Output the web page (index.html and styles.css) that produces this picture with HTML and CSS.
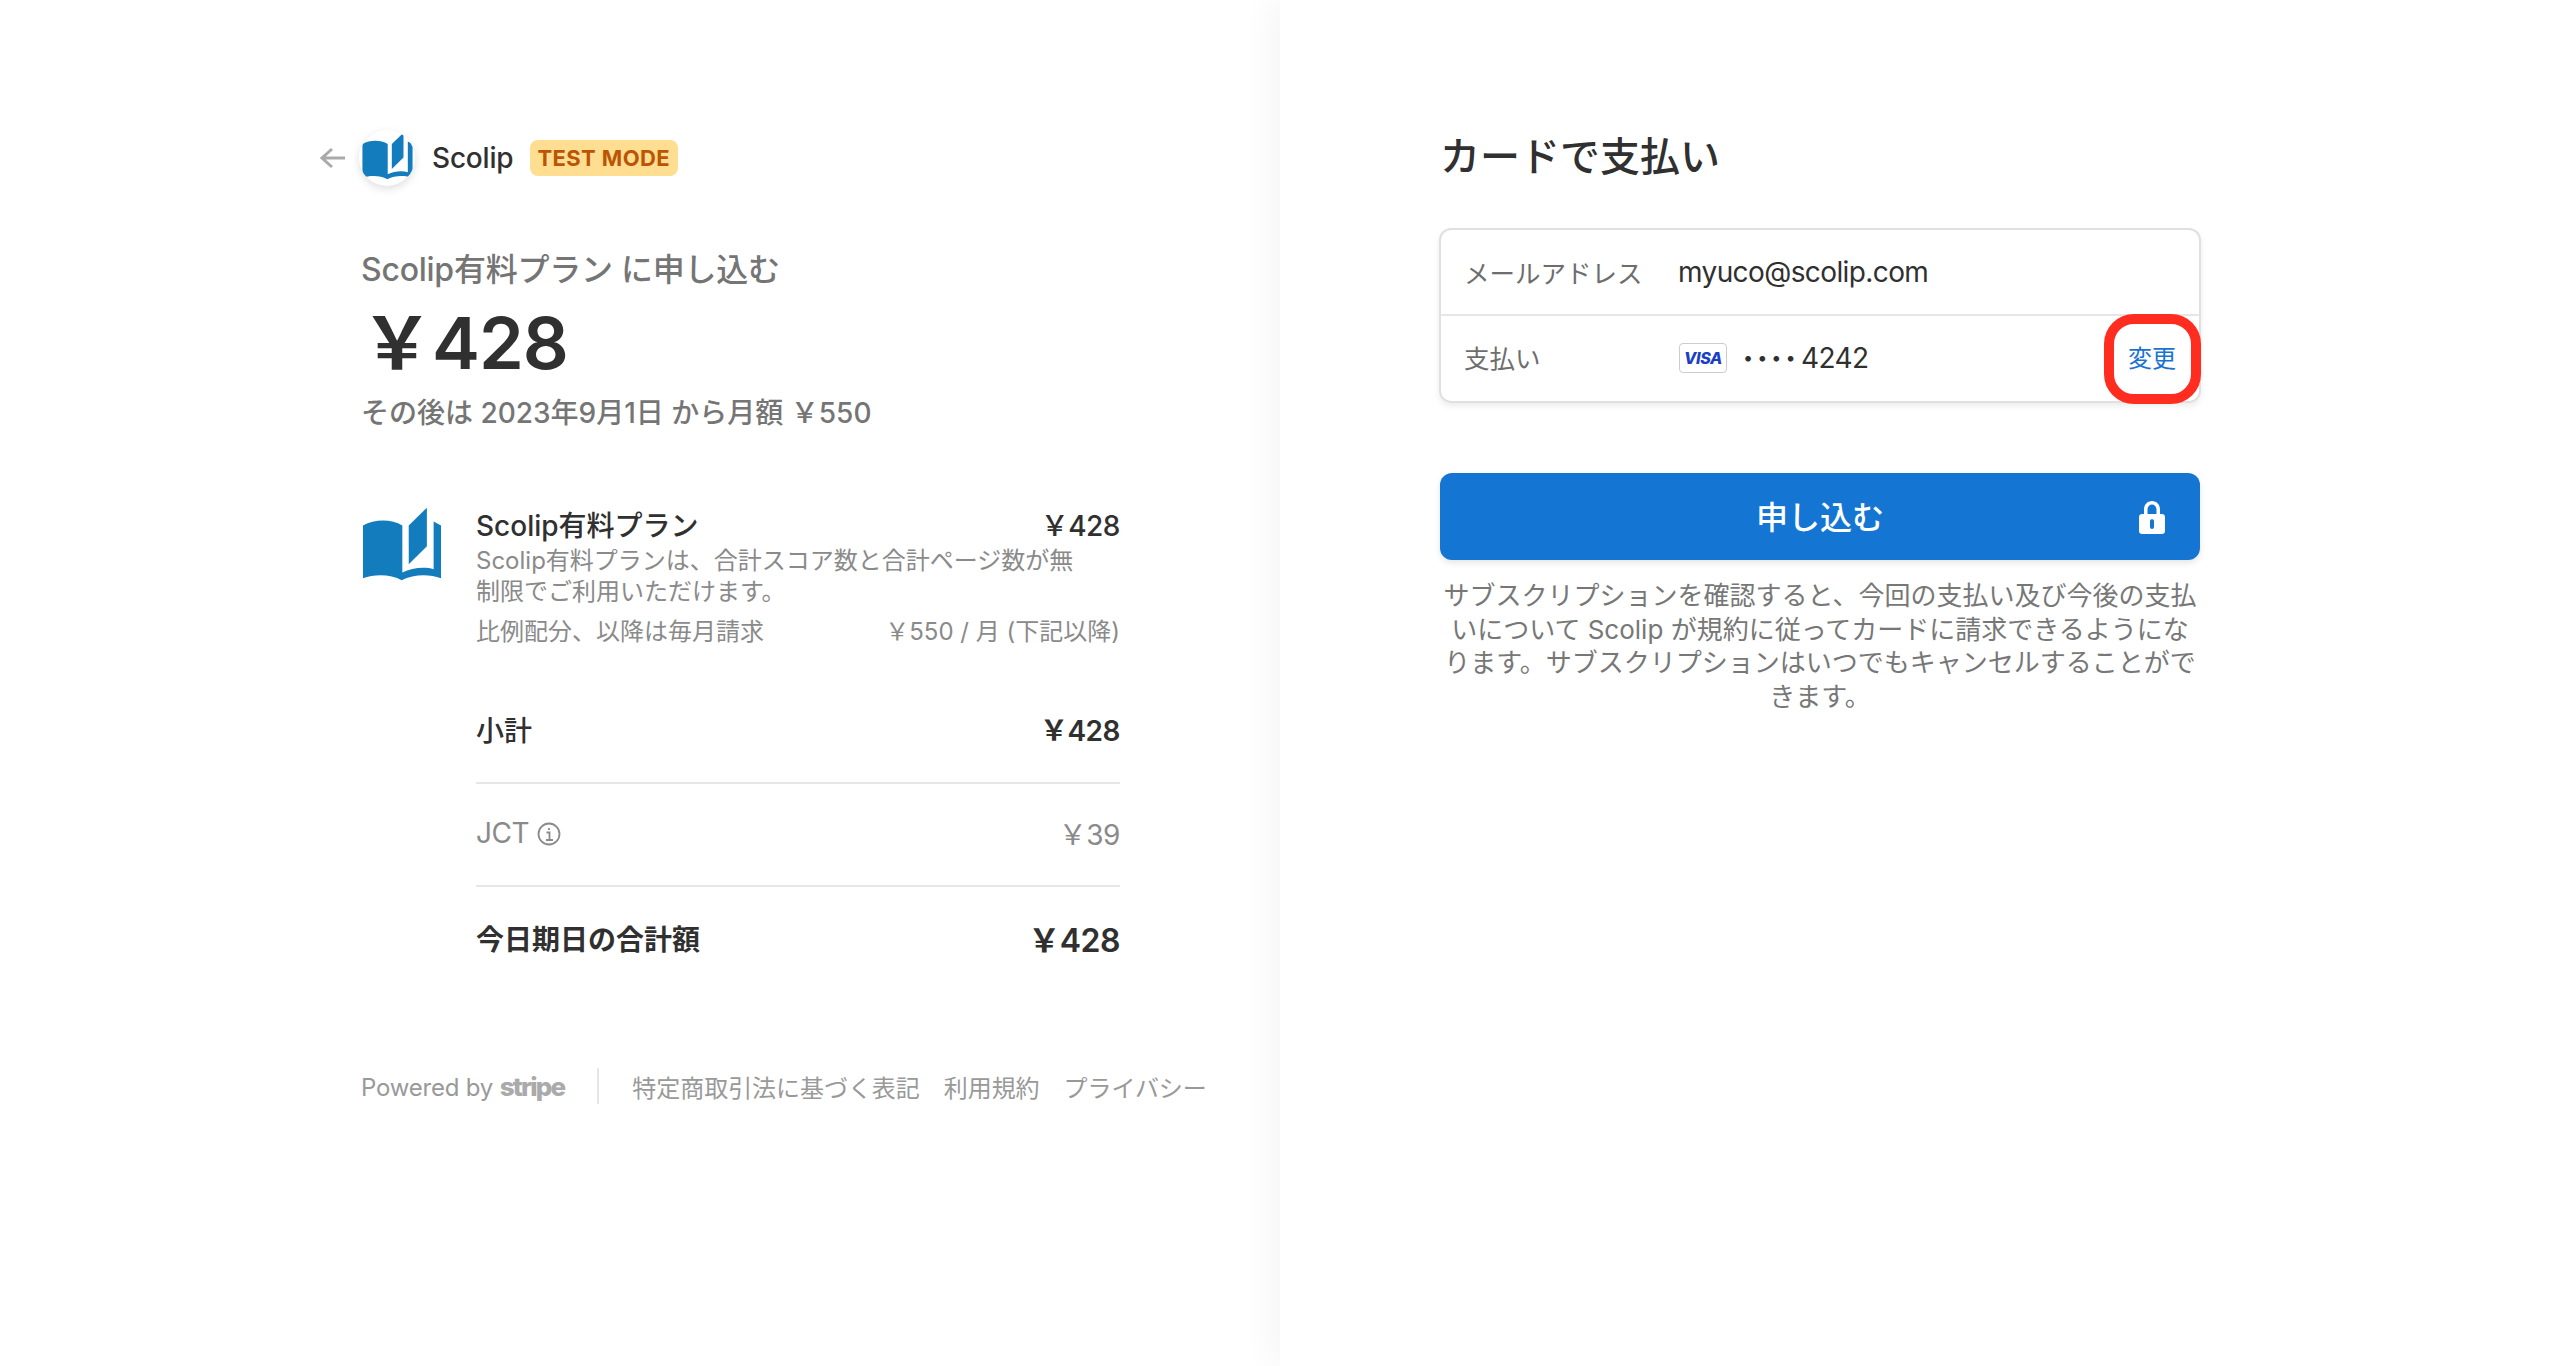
FILE: index.html
```html
<!DOCTYPE html>
<html lang="ja">
<head>
<meta charset="utf-8">
<title>Scolip</title>
<link rel="stylesheet" href="styles.css">
</head>
<body>
<svg class="defs" width="0" height="0" aria-hidden="true"><symbol id="book" viewBox="38 20 236 220"><path d="M40 75C75 55 125 55 157 75V215C185 200 225 197 250 205V63L272 75V232C235 218 190 220 155 238C125 220 75 218 40 232Z"/><path d="M176 75L230 22V137L176 190Z"/></symbol></svg>
<main class="page">
  <section class="summary">
    <header class="brand">
      <svg class="back" viewBox="0 0 26 22"><path d="M12 2L2 11L12 20M2 11H25"/></svg>
      <span class="logo"><svg class="logo-book"><use href="#book"/></svg></span>
      <span class="brand-name">Scolip</span>
      <span class="badge">TEST MODE</span>
    </header>
    <div class="inset">
      <div class="sub-title">Scolip有料プラン に申し込む</div>
      <div class="amount">&#xFFE5;428</div>
      <div class="then">その後は 2023年9月1日 から月額 &#xFFE5;550</div>
      <div class="item">
        <svg class="item-book"><use href="#book"/></svg>
        <div class="item-body">
          <div class="item-head"><span>Scolip有料プラン</span><span class="price">&#xFFE5;428</span></div>
          <p class="item-desc">Scolip有料プランは、合計スコア数と合計ページ数が無制限でご利用いただけます。</p>
          <div class="item-bill"><span>比例配分、以降は毎月請求</span><span>&#xFFE5;550 / 月 (下記以降)</span></div>
        </div>
      </div>
      <div class="totals">
        <div class="row row-sub"><span>小計</span><b class="price">&#xFFE5;428</b></div>
        <div class="row row-tax"><span class="tax-label">JCT<svg class="info" viewBox="0 0 24 24"><circle cx="12" cy="12" r="10.5"/><path d="M9.5 10.5H12.5V18M9 18H16M12 6V8"/></svg></span><span class="price">&#xFFE5;39</span></div>
        <div class="row row-total"><span>今日期日の合計額</span><b class="price">&#xFFE5;428</b></div>
      </div>
      <footer class="foot">
        <span class="powered">Powered by <b class="stripe">stripe</b></span>
        <span class="foot-sep"></span>
        <nav class="foot-links"><span>特定商取引法に基づく表記</span><span>利用規約</span><span>プライバシー</span></nav>
      </footer>
    </div>
  </section>
  <section class="pay">
    <h1 class="pay-title">カードで支払い</h1>
    <div class="card">
      <div class="card-row line"><span class="card-label">メールアドレス</span><span class="card-value">myuco@scolip.com</span></div>
      <div class="card-row card-pay"><span class="card-label">支払い</span><span class="visa">VISA</span><span class="dots">••••</span><span class="card-value">4242</span><span class="change">変更</span><span class="mark"></span></div>
    </div>
    <button class="submit"><span>申し込む</span><svg class="lock" viewBox="0 0 26 33"><path fill-rule="evenodd" d="M5 13V8.500C5 3.500 8.500 0 13 0S21 3.500 21 8.500V13H23C24.700 13 26 14.300 26 16V30C26 31.700 24.700 33 23 33H3C1.300 33 0 31.700 0 30V16C0 14.300 1.300 13 3 13ZM8.500 13H17.500V8.500C17.500 5.500 15.500 3.500 13 3.500S8.500 5.500 8.500 8.500ZM11 20V26C11 28.500 15 28.500 15 26V20C15 17.500 11 17.500 11 20Z"/></svg></button>
    <p class="terms">サブスクリプションを確認すると、今回の支払い及び今後の支払いについて Scolip が規約に従ってカードに請求できるようになります。サブスクリプションはいつでもキャンセルすることができます。</p>
  </section>
</main>
</body>
</html>
```
FILE: styles.css
```css
* { box-sizing: border-box; }
html, body { margin: 0; height: 100%; background: #fff; }
body { font-family: Inter, "Noto Sans CJK JP", sans-serif; color: #303030; overflow: hidden; }
.defs { position: absolute; }
.page { display: grid; grid-template-columns: 1280px 1280px; height: 1366px; }

.summary { padding: 130px 0 0 320px; background: #fff; }
.brand { display: flex; align-items: center; height: 56px; }
.back { width: 26px; height: 22px; fill: none; stroke: #aaa; stroke-width: 3; }
.logo { width: 56px; height: 56px; margin-left: 13px; border-radius: 50%; background: #fff; box-shadow: 0 3px 8px rgba(0,0,0,.13); overflow: hidden; display: flex; align-items: center; justify-content: center; flex: none; }
.logo-book { width: 51px; height: 48px; fill: #137cbd; margin-top: -5px; margin-left: 1px; }
.brand-name { margin-left: 17px; font-size: 28px; font-weight: 500; line-height: 36px; color: #303030; letter-spacing: -.2px; }
.badge { margin-left: 17px; height: 36px; padding: 0 8px 0 7px; display: flex; align-items: center; background: #ffde92; border-radius: 8px; font-size: 22px; font-weight: 700; color: #bb5504; letter-spacing: .4px; }

.inset { padding-left: 41px; width: 800px; }
.sub-title { margin-top: 64px; font-size: 32px; line-height: 40px; font-weight: 500; color: #757575; letter-spacing: -.25px; }
.amount { margin-top: 9px; font-size: 72px; line-height: 88px; font-weight: 600; color: #303030; letter-spacing: -1px; }
.then { margin-top: 8px; font-size: 28px; line-height: 36px; font-weight: 500; color: #757575; white-space: nowrap; }

.item { display: flex; margin-top: 77px; }
.item-book { width: 80px; height: 74px; fill: #137cbd; flex: none; margin: -1px 0 0 1px; }
.item-body { margin-left: 34px; flex: 1; }
.item-head { display: flex; justify-content: space-between; font-size: 28px; line-height: 36px; font-weight: 500; color: #303030; }
.price { letter-spacing: -.5px; }
.item-desc { margin: 1px 0 0; width: 620px; font-size: 24px; line-height: 31px; color: #8a8a8a; }
.item-bill { display: flex; justify-content: space-between; margin-top: 9px; font-size: 24px; line-height: 32px; color: #8a8a8a; }

.totals { margin: 31px 0 0 115px; }
.row { display: flex; justify-content: space-between; align-items: center; height: 103px; padding-bottom: 3px; font-size: 28px; font-weight: 500; }
.row b { font-weight: 600; }
.row-sub { height: 105px; }
.row-sub, .row-tax { border-bottom: 2px solid #e6e6e6; }
.row-tax { color: #8a8a8a; font-weight: 400; }
.row-total { height: 104px; font-weight: 600; }
.row-total b { font-size: 32px; }
.tax-label { display: flex; align-items: center; gap: 8px; letter-spacing: -.5px; }
.info { width: 24px; height: 24px; fill: none; stroke: #8a8a8a; stroke-width: 1.800; margin-top: 2px; }

.foot { display: flex; align-items: center; height: 36px; margin-top: 77px; font-size: 24px; color: #999; white-space: nowrap; }
.powered { letter-spacing: -.2px; }
.stripe { font-size: 26px; font-weight: 800; letter-spacing: -1.800px; color: #aaa; }
.foot-sep { width: 2px; height: 36px; background: #e6e6e6; margin: 0 33px; flex: none; }
.foot-links { display: flex; gap: 24px; letter-spacing: -.05px; }

.pay { padding: 131px 0 0 160px; background: #fff; box-shadow: -10px 0 30px rgba(0,0,0,.04); width: 1280px; }
.pay > * { width: 760px; }
.pay-title { margin: 0; font-size: 40px; line-height: 52px; font-weight: 500; color: #303030; }
.card { margin-top: 45px; width: 762px !important; margin-left: -1px; height: 175px; border: 2px solid #e0e0e0; border-radius: 12px; box-shadow: 0 3px 6px rgba(0,0,0,.08); font-size: 28px; }
.card-row { display: flex; align-items: center; height: 85.500px; padding-left: 23px; position: relative; }
.card-pay { padding-bottom: 2px; }
.line { border-bottom: 2px solid #e6e6e6; height: 86px; }
.card-label { width: 214px; color: #6d6d6d; flex: none; font-size: 25.500px; margin-top: -2px; }
.card-value { letter-spacing: -.6px; }
.visa { width: 48px; height: 30px; margin-left: 1px; border: 1.500px solid #ccc; border-radius: 4px; font-size: 16px; font-weight: 800; font-style: italic; color: #1a3fc4; display: flex; align-items: center; justify-content: center; letter-spacing: -.3px; }
.dots { margin-left: 16px; width: 58px; font-size: 18px; letter-spacing: 4px; }
.change { position: absolute; right: 23px; font-size: 24px; color: #1a73d2; margin-top: -3px; }
.mark { position: absolute; right: -2px; top: -2px; width: 97px; height: 90px; border: 10px solid #ff2d20; border-radius: 30px; }

.submit { margin-top: 70px; height: 87px; border: 0; border-radius: 12px; background: #1476d2; color: #fff; font: inherit; font-size: 32px; font-weight: 500; display: flex; align-items: center; justify-content: center; position: relative; box-shadow: 0 3px 6px rgba(0,0,0,.1); padding: 0 0 4px; }
.lock { position: absolute; right: 35px; top: 28px; width: 26px; height: 33px; fill: #fff; }
.terms { margin: 19px 0 0; font-size: 26px; line-height: 33.600px; text-align: center; color: #777; }
```
